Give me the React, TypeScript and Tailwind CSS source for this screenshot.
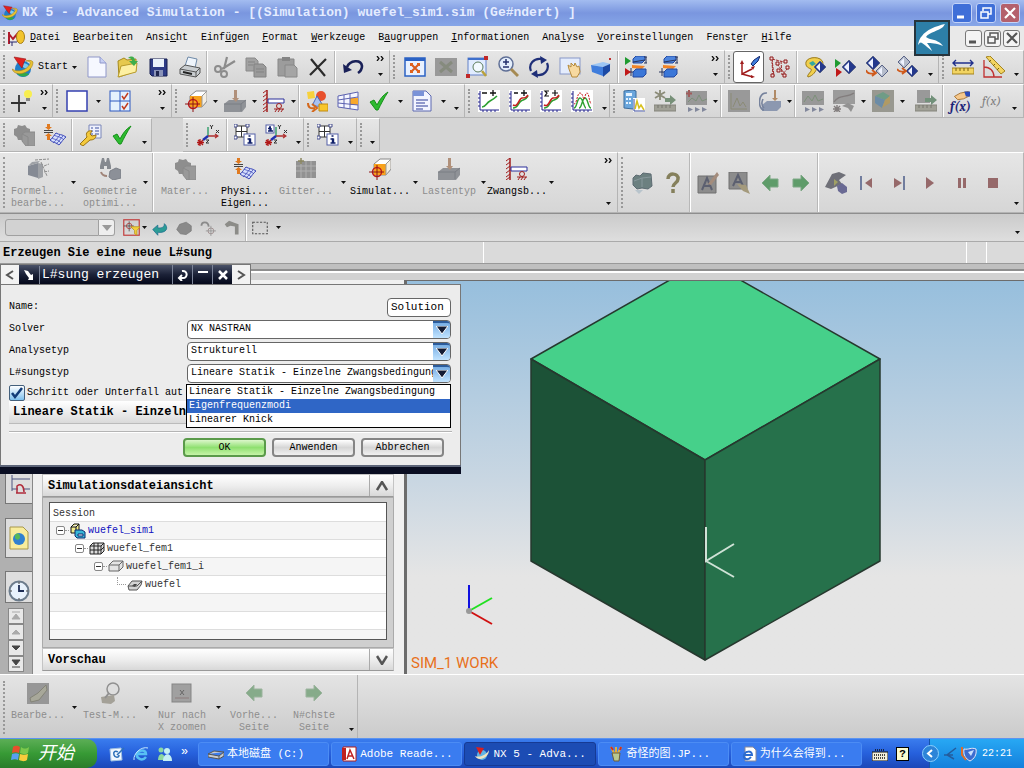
import { useState, type ReactNode } from "react";
import clsx from "clsx";

const MENU: [string, string, string][] = [
  ["", "D", "atei"],
  ["", "B", "earbeiten"],
  ["Ansi", "c", "ht"],
  ["Einf", "ü", "gen"],
  ["", "F", "ormat"],
  ["", "W", "erkzeuge"],
  ["B", "a", "ugruppen"],
  ["", "I", "nformationen"],
  ["Ana", "l", "yse"],
  ["", "V", "oreinstellungen"],
  ["Fenst", "e", "r"],
  ["", "H", "ilfe"],
];

const SOLUTION_TYPES = [
  "Lineare Statik - Einzelne Zwangsbedingung",
  "Eigenfrequenzmodi",
  "Linearer Knick",
];

function Svg({ children, size = 22 }: { children: ReactNode; size?: number }) {
  return (
    <svg width={size} height={size} viewBox="0 0 22 22" fill="none" className="shrink-0" aria-hidden>
      {children}
    </svg>
  );
}

// Shared drawing parts
const graphFrame = (
  <>
    <path d="M0 0h22v22H0z" fill="#fff" />
    <path d="M2 1v19h19" stroke="#22228c" />
    <path d="M0 4h2M0 8h2M0 12h2M0 16h2M5 20v2M9 20v2M13 20v2M17 20v2" stroke="#22228c" />
  </>
);

const infoBadge = (x: number, y: number, s: number) => (
  <>
    <rect x={x} y={y} width={s} height={s} fill="#fff" stroke="#5560a8" />
    <path
      d={`M${x + s / 2 - 2} ${y + s - 2}h5M${x + s / 2 - 2} ${y + s / 2 - 0.5}h3M${x + s / 2 - 1} ${y + 2}h2`}
      stroke="#10206a"
      strokeWidth="1.500"
    />
    <path d={`M${x + s / 2 + 0.5} ${y + s / 2 - 1}v${s / 2 - 1}`} stroke="#10206a" strokeWidth="2.400" />
  </>
);

const csys = (
  <>
    <path d="M11 3v9" stroke="#3aa070" strokeWidth="1.500" />
    <path d="M11 12h10M18 10l3 2-3 2" stroke="#b03030" strokeWidth="1.300" />
    <path d="M11 12l-5 4" stroke="#2030b0" strokeWidth="2.500" />
    <path d="M3 15v7M0 18.500h7M1 16l5 5M6 16l-5 5" stroke="#b01818" strokeWidth="1.300" />
    <path d="M13 1l1.500 2L16 1M14.500 3v2M19 6l3 3M22 6l-3 3M9 16h3l-3 3h3" stroke="#333" />
  </>
);

const diamond = (x: number, y: number, w: number, c: string) => (
  <>
    <path d={`M${x} ${y}l${w} ${-w} ${w} ${w} ${-w} ${w}z`} fill={c} stroke="#5a6488" />
    <path d={`M${x + 2} ${y}l${w - 2} ${2 - w}v${(w - 2) * 2}z`} fill="#eef2ff" />
  </>
);

const solverBlocks = (
  <>
    <path d="M8 3l3-3h9v4l-3 3H8z" fill="#4d84dd" stroke="#2248a0" />
    <path d="M7 9l13 1-3 3-10-1z" fill="#f08428" />
    <path d="M8 16l3-3h10v5l-3 3H8z" fill="#3b77d8" stroke="#2248a0" />
    <path d="M21 1v6M19 1h3M19 7h3M6 12v8M3 16h5M8 6l12-2" stroke="#26325c" />
  </>
);

const ICONS: Record<string, ReactNode> = {
  nx: (
    <>
      <circle cx="11" cy="13" r="8" fill="#1f7fc8" />
      <path d="M5 17c2 4 8 5 12 1-3-1-7-3-12-1z" fill="#2fa84a" />
      <path d="M8 8c4-2 9 0 10 4-3 2-7 0-10-4z" fill="#7fc9ee" />
      <path d="M0 13c3 9 21 4 21-7-1-2-5-2-7-1 3 0 5 1 4 3-3 6-12 9-18 5z" fill="#e8c233" stroke="#a5801a" strokeWidth=".6" />
      <path d="M2 1l12 2-2 3-2 6-4-5z" fill="#e02020" stroke="#98120f" strokeWidth=".6" />
    </>
  ),
  newDoc: (
    <>
      <path d="M2 1h12l6 6v14H2z" fill="#f6f8ff" stroke="#8f97c9" />
      <path d="M14 1v6h6" fill="#c7d0f4" stroke="#8f97c9" />
    </>
  ),
  open: (
    <>
      <path d="M1 5l6-3 3 2 9-1v12L2 21z" fill="#e6c94e" stroke="#a58a1e" />
      <path d="M1 21l3-11 16-3-1 9z" fill="#fdf0a2" stroke="#b89b2c" />
      <path d="M11 2c4-3 7-1 7 3h3l-4 5-5-5h3c0-2-2-3-4-3z" fill="#3fae4a" />
    </>
  ),
  save: (
    <>
      <path d="M2 3h17v17H4l-2-2z" fill="#2d3b86" stroke="#161e50" />
      <path d="M5 3h11v8H5z" fill="#e9f1fb" />
      <path d="M6 14h9v6H6z" fill="#8a93b8" />
      <path d="M8 15h3v5H8z" fill="#20274f" />
    </>
  ),
  print: (
    <>
      <path d="M6 10l3-9 9 2-2 9z" fill="#eef4fb" stroke="#6f8aa8" />
      <path d="M1 13l5-4 15 3v5l-4 4-16-3z" fill="#c9cdd0" stroke="#555" />
      <path d="M1 13l16 3 4-4M17 16v5" stroke="#555" />
      <path d="M4 16l9 2" stroke="#222" strokeWidth="2" />
    </>
  ),
  cut: (
    <>
      <path d="M13 1l-3 12M21 5L8 13" stroke="#8c8c8c" strokeWidth="2.200" />
      <circle cx="4" cy="13" r="3" stroke="#8c8c8c" strokeWidth="2" />
      <circle cx="10" cy="18" r="3" stroke="#8c8c8c" strokeWidth="2" />
    </>
  ),
  copy: (
    <>
      <path d="M1 2h9l3 3v10H1z" fill="#a2a2a2" stroke="#8a8a8a" />
      <path d="M9 8h9l3 3v10H9z" fill="#9a9a9a" stroke="#828282" />
      <path d="M11 13h8M11 16h8M3 6h7M3 9h5" stroke="#838383" />
    </>
  ),
  paste: (
    <>
      <path d="M2 3h16v17H2z" fill="#9c9c9c" stroke="#878787" />
      <path d="M6 1h8v4H6z" fill="#858585" />
      <path d="M9 9h9l3 3v9H9z" fill="#a5a5a5" stroke="#888" />
    </>
  ),
  del: <path d="M4 3l14 17M19 3L3 19" stroke="#2b2b2b" strokeWidth="2.200" />,
  undo: (
    <>
      <path d="M5 11C8 4 19 3 20 10c0 3-1 5-4 7" stroke="#1a2158" strokeWidth="2.600" />
      <path d="M1 8l1 9 8-3z" fill="#1a2158" />
    </>
  ),
  fit: (
    <>
      <rect x="1" y="2" width="20" height="18" fill="#e8f1ff" stroke="#2b62c4" strokeWidth="1.500" />
      <path d="M1 2h20v3H1z" fill="#2b62c4" />
      <path d="M7 8l8 8M15 8l-8 8" stroke="#d85a1c" strokeWidth="2" />
      <path d="M6 7h3v3H6zM13 7h3v3h-3zM6 14h3v3H6zM13 14h3v3h-3z" fill="#e0621c" />
    </>
  ),
  fitOff: (
    <>
      <path d="M0 2h22v18H0z" fill="#999" />
      <path d="M5 6l12 10M17 6L5 16" stroke="#868b7e" strokeWidth="3" />
    </>
  ),
  zoomWin: (
    <>
      <rect x="2" y="2" width="18" height="17" fill="#e1ecff" stroke="#6482c8" />
      <path d="M2 2h18v2H2z" fill="#3f70cc" />
      <circle cx="12" cy="11" r="5" fill="#f3faff" stroke="#5c7c5c" />
      <path d="M16 15l4 5" stroke="#b9a13c" strokeWidth="2.500" />
      <path d="M0 18h4v4H0zM18 0h4v4h-4z" fill="#c02828" />
    </>
  ),
  zoom: (
    <>
      <circle cx="9" cy="8" r="7" fill="#e4eefb" stroke="#5f6f96" strokeWidth="1.500" />
      <path d="M6 6h6M9 3v6M6 11h6" stroke="#26326e" strokeWidth="1.500" />
      <path d="M14 13l7 7" stroke="#a58a52" strokeWidth="3" />
    </>
  ),
  rotate: (
    <>
      <path d="M3 15C0 8 6 2 13 3M19 7c3 7-3 13-10 12" stroke="#1f2f78" strokeWidth="2.200" />
      <path d="M12 0l7 4-6 4zM10 22l-7-4 6-4z" fill="#1f2f78" />
    </>
  ),
  pan: (
    <>
      <rect x="1" y="2" width="20" height="16" fill="#e4ecfc" stroke="#8898c8" />
      <path d="M10 13l-1-4 3 2V7l3 3 1-3 2 4 2-1 1 6-3 5h-5z" fill="#f7d9a0" stroke="#b58a3c" />
    </>
  ),
  cube: (
    <>
      <path d="M1 9l12-3 8 2-8 3z" fill="#9cc6f4" />
      <path d="M1 9l12 2v9L2 16z" fill="#3f7ddc" />
      <path d="M13 11l7-3v7l-7 6z" fill="#1c4aa4" />
      <path d="M19 2h2v2h-2z" fill="#c03030" />
    </>
  ),
  solve1: (
    <>
      {solverBlocks}
      <path d="M0 1l6 4-6 4z" fill="#1f9a30" />
      <path d="M0 12l6 4-6 4z" fill="#c01818" />
    </>
  ),
  solve2: solverBlocks,
  axes: (
    <>
      <path d="M4 6v12l10-5M4 18l11 3" stroke="#a01c1c" strokeWidth="1.500" />
      <path d="M2 8l2-4 2 4zM13 11l4-1-2 4zM13 19l4 2-4 1z" fill="#a01c1c" />
      <path d="M13 8l3-4 6-4-2 5-5 5z" fill="#3f7ddc" stroke="#16286c" />
    </>
  ),
  nodes: (
    <>
      <path d="M3 3l12 3M4 20L3 6M8 8l8 10M3 3l2 17M12 5l1 14 6-7" stroke="#a02c2c" strokeDasharray="3 1" />
      <path d="M1 1h3v3H1zM7 6h3v3H7zM15 4h3v3h-3zM2 18h3v3H2zM8 13h3v3H8zM14 18h3v3h-3zM17 10h3v3h-3z" fill="#f6dada" stroke="#8c1818" />
    </>
  ),
  palette: (
    <>
      <path d="M2 6c2-6 16-6 17 1 0 4-5 2-6 5s-4 8-9 9c-2-2 5-6 3-8-2-1-6-2-5-7z" fill="#f1cf4c" stroke="#9a7a1e" />
      <path d="M5 7l4-2 3 3-4 2z" fill="#35a8a0" />
      {diamond(10, 11, 6, "#24388c")}
    </>
  ),
  playDiamond: (
    <>
      <path d="M0 3l6 4-6 5z" fill="#1f9a30" />
      <path d="M1 12l6 4-6 5z" fill="#c01818" />
      {diamond(7, 11, 7, "#24388c")}
    </>
  ),
  diaUp: (
    <>
      {diamond(0, 7, 7, "#24388c")}
      {diamond(10, 15, 6, "#b5bccb")}
      <path d="M0 14c1 4 5 4 9 3M6 14l4 3-4 3" stroke="#d05a1c" strokeWidth="1.800" />
    </>
  ),
  diaDown: (
    <>
      {diamond(1, 6, 6, "#b5bccb")}
      {diamond(9, 15, 6, "#24388c")}
      <path d="M0 13c2 3 5 3 8 2M5 12l4 3-4 3" stroke="#d05a1c" strokeWidth="1.800" />
    </>
  ),
  ruler: (
    <>
      <path d="M1 7h20M4 4L1 7l3 3M18 4l3 3-3 3" stroke="#1f2f8c" strokeWidth="1.400" />
      <path d="M0 12h22v6H0z" fill="#f2d462" stroke="#a3831e" />
      <path d="M4 12v3M8 12v3M12 12v3M16 12v3" stroke="#7a6010" />
    </>
  ),
  angle: (
    <>
      <path d="M1 4v17h18M1 11c6 0 10 4 10 10" stroke="#c03030" strokeWidth="1.300" />
      <path d="M3 1l4-1 15 15-4 3z" fill="#f2d462" stroke="#a3831e" />
      <path d="M8 4L6 6M12 8l-2 2M16 12l-2 2" stroke="#7a6010" />
    </>
  ),
  point: (
    <>
      <path d="M0 13h15M8 5v17" stroke="#333" strokeWidth="1.800" />
      <circle cx="17" cy="4" r="4" fill="#f8ee50" />
      <path d="M15 8h4v3h-4z" fill="#888" />
    </>
  ),
  square: <rect x="1" y="1" width="20" height="20" fill="#fff" stroke="#3440b0" strokeWidth="1.500" />,
  checks: (
    <>
      <rect x="1" y="1" width="20" height="20" fill="#e5f1fd" stroke="#2c58c0" />
      <path d="M11 1v20M1 11h20" stroke="#2c58c0" />
      <path d="M13 6l2 3 4-6M13 16l2 3 4-6" stroke="#c23a1c" strokeWidth="1.500" />
    </>
  ),
  sim: (
    <>
      <path d="M5 6l6-5h11v10l-5 6H5z" fill="#fff" stroke="#888" />
      <path d="M5 6h12v11H5z" fill="#f8a21c" />
      <path d="M17 6l5-5v10l-5 6z" fill="#f3eee4" stroke="#999" />
      <circle cx="8" cy="14" r="4.500" stroke="#c01c1c" strokeWidth="1.500" />
      <path d="M0 14h15M8 7v15" stroke="#8e1414" />
    </>
  ),
  load: (
    <>
      <path d="M0 14l5-4h17v7l-4 5H0z" fill="#8f9297" />
      <path d="M0 14h17l5-4M17 14v7" stroke="#7b7e84" />
      <path d="M10 0h3v8h2l-3 4-4-4h2z" fill="#b0907a" />
    </>
  ),
  constraint: (
    <>
      <path d="M4 0v22" stroke="#a01c1c" strokeWidth="1.500" />
      <path d="M0 3l4-3M0 7l4-3M0 11l4-3M0 15l4-3M0 19l4-3M0 22l4-3" stroke="#a01c1c" />
      <path d="M5 9h16v4H5z" fill="#fff" stroke="#2a2f9a" />
      <circle cx="16" cy="16" r="2.500" stroke="#a01c1c" />
      <path d="M11 19h10M12 22l2-3M15 22l2-3M18 22l2-3" stroke="#a01c1c" />
    </>
  ),
  shapes: (
    <>
      <path d="M1 2l7-1 1 7-7 1z" fill="#f7d13c" />
      <circle cx="15" cy="6" r="5" fill="#e8502c" />
      <path d="M7 14l4-8 5 8c-2 3-7 3-9 0z" fill="#a8c2f0" stroke="#4a68b8" />
      <path d="M13 14h9v7h-9z" fill="#f8c62c" stroke="#c08a14" />
      <path d="M2 13c0 5 3 6 7 5M6 14l5 4-5 4" stroke="#d4681c" strokeWidth="2" />
    </>
  ),
  nozzle: (
    <>
      <path d="M1 6l20-4v18L1 17z" fill="#f5f6ff" stroke="#5c62b0" />
      <path d="M13 8h8v7h-8z" fill="#f8a82c" />
      <path d="M1 10l20-3M1 13l20 2M7 5v13M13 4v15" stroke="#5c62b0" />
    </>
  ),
  check: <path d="M2 12l4-2 3 5C12 9 15 5 20 2c-4 6-7 12-10 18H8z" fill="#2dbb30" stroke="#159018" />,
  report: (
    <>
      <path d="M2 1h13l5 5v15H2z" fill="#f2f4ff" stroke="#5c68b0" />
      <path d="M2 1h11v5H2z" fill="#7a92d8" />
      <path d="M5 10h12M5 13h9M5 16h12M5 19h7" stroke="#2c3c98" />
    </>
  ),
  graph1: (
    <>
      {graphFrame}
      <path d="M4 17c4 0 4-4 8-6s4-2 7-5" stroke="#2ca030" strokeWidth="1.600" />
      <path d="M4 3h5M12 3h6M15 0v6" stroke="#111" strokeWidth="1.300" />
    </>
  ),
  graph2: (
    <>
      {graphFrame}
      <path d="M4 18c5 0 5-5 8-7s5-1 7-5" stroke="#2ca030" strokeWidth="1.600" />
      <path d="M4 15c5 3 6-7 9-7s4 0 6-3" stroke="#c82020" strokeWidth="1.600" />
      <path d="M5 3h4M12 3h6M15 0v6" stroke="#111" strokeWidth="1.300" />
    </>
  ),
  graph3: (
    <>
      {graphFrame}
      <path d="M4 18c5 0 5-5 8-7s5-1 7-5" stroke="#2ca030" strokeWidth="1.600" />
      <path d="M4 15c5 3 6-7 9-7s4 0 6-3" stroke="#c82020" strokeWidth="1.600" />
      <path d="M9 1H5l2 2-2 3h4M12 3h6M15 0v6" stroke="#111" strokeWidth="1.200" />
    </>
  ),
  graph4: (
    <>
      {graphFrame}
      <path d="M3 18C6 18 6 8 9 8s4 10 6 10M8 18c3 0 3-10 6-10s3 10 6 10" stroke="#2ca030" strokeWidth="1.400" />
      <path d="M3 14C6 14 6 3 9 3s3 6 4 6 1-6 3-6 2 8 4 11" stroke="#c82020" strokeDasharray="2 1" />
    </>
  ),
  calc: (
    <>
      <path d="M1 1l9-1 3 1v16l-3 2-9-1z" fill="#6aa6dc" stroke="#3c6c9c" />
      <path d="M3 3h6v3H3zM3 8h2v2H3zM6 8h2v2H6zM3 12h2v2H3zM6 12h2v2H6z" fill="#e8f4ff" />
      <path d="M10 8h12v14H10z" fill="#fff" />
      <path d="M11 9v12h11" stroke="#3a4a9c" />
      <path d="M12 19l2-8 2 7 2-3 3 5" stroke="#d8c01c" strokeWidth="1.500" />
    </>
  ),
  starRuler: (
    <>
      <path d="M6 0v10M1 2l10 6M11 2L1 8" stroke="#8b8b78" strokeWidth="1.800" />
      <path d="M11 8h5V5l6 5-6 5v-3h-5z" fill="#779078" />
      <path d="M0 15h22v6H0z" fill="#a0a096" stroke="#85857c" />
      <path d="M4 15v3M8 15v3M12 15v3M16 15v3" stroke="#77776e" />
    </>
  ),
  grayPlot: (
    <>
      <path d="M0 1h22v14H0z" fill="#989898" />
      <path d="M2 12l4-6 4 5 3-6 3 6 5-2" stroke="#7c9079" />
      <path d="M3 17l5 2.500L3 22zM10 17l5 2.500-5 2.500zM17 17l5 2.500-5 2.500z" fill="#82889c" />
    </>
  ),
  grayPlotNew: (
    <>
      <path d="M1 1h21v14H1z" fill="#989898" />
      <path d="M3 12l4-4 4 3 3-6 3 6 5-2" stroke="#7c9079" />
      <path d="M4 0v7M1 3.500h6" stroke="#a05c5c" strokeWidth="2" />
      <path d="M3 17l5 2.500L3 22zM10 17l5 2.500-5 2.500zM17 17l5 2.500-5 2.500z" fill="#82889c" />
    </>
  ),
  grayBox: (
    <>
      <path d="M0 0h22v22H0z" fill="#999" />
      <path d="M3 3v16h16M5 17l4-9 3 8 3-4 3 5" stroke="#8b8b76" />
    </>
  ),
  loadPart: (
    <>
      <path d="M3 15l5-4h14v6l-4 4H3z" fill="#8c98b0" />
      <path d="M15 0h2v8h2l-3 3-3-3h2z" fill="#b08a66" />
      <path d="M8 3C-2 2-1 20 5 20M4 9c-2 4-1 7 1 9" stroke="#76829c" strokeWidth="1.600" />
    </>
  ),
  grayNet: (
    <>
      <path d="M0 0h22v14H0z" fill="#9b9b9b" />
      <path d="M1 12C6 4 14 8 21 3M4 15v7M0 19h8M1 16l6 6M7 16l-6 6" stroke="#827d7d" strokeWidth="1.400" />
      <path d="M9 16l6-3 6 3-3 6-3-4z" fill="#929292" />
    </>
  ),
  grayMap: (
    <>
      <path d="M0 0h22v22H0z" fill="#989890" />
      <path d="M3 6l8-4 7 4-5 4z" fill="#6f9c86" />
      <path d="M3 6l10 4-3 8-7-5z" fill="#6c8ca6" />
      <path d="M13 10l5-4v7l-8 5z" fill="#b09a64" />
    </>
  ),
  grayRuler: (
    <>
      <path d="M2 0h13v13H2z" fill="#999" />
      <path d="M10 8h6V5l6 5-6 5v-3h-6z" fill="#72917a" />
      <path d="M0 15h22v6H0z" fill="#a0a096" stroke="#85857c" />
      <path d="M4 15v3M8 15v3M12 15v3M16 15v3" stroke="#77776e" />
    </>
  ),
  material: (
    <>
      <path d="M1 5l3-1 1-3 4 1 3-1 2 3 3 1v4l-2 3-2 4H5l-1-3-3-2z" fill="#8e8e8e" />
      <path d="M9 10l3-2h10v14H13l-4-5z" fill="#999" stroke="#8a8a8a" />
      <path d="M9 10l6 3v9" stroke="#8a8a8a" />
    </>
  ),
  physical: (
    <>
      <path d="M3 0h3v3h2L4.500 6 1 3h2zM3 16h3v-4h2L4.500 9 1 12h2z" fill="#e07a20" />
      <path d="M0 6.500h9M0 8.500h9" stroke="#333" strokeWidth=".9" />
      <path d="M6 16c3-2 4-5 6-7 3 2 6 1 10 4-3 2-4 5-7 8-3-3-6-2-9-5z" fill="#d6dffc" stroke="#3c48b8" />
      <path d="M9 19c3-2 4-5 7-8M12 20c3-2 4-5 7-8M8 14c3 2 6 1 9 5M10 11c3 2 6 1 10 5" stroke="#3c48b8" strokeWidth=".8" />
    </>
  ),
  wrench: (
    <>
      <path d="M9 1h12v13H9z" fill="#eef1fc" stroke="#7a86b8" />
      <path d="M11 4h2M15 4h4M11 7h2M15 7h4M11 10h2M15 10h4" stroke="#3c50a0" />
      <path d="M0 20l7-7c-2-4 1-7 5-6l-2 3 2 2 4-1c0 4-3 5-6 5l-7 6z" fill="#f3c93c" stroke="#9a7414" />
    </>
  ),
  csys,
  meshInfo: (
    <>
      <path d="M2 2h11v11H2zM7.500 2v11M2 7.500h11" fill="#fff" stroke="#333" />
      <path d="M0 0h3v3H0zM12 0h3v3h-3zM0 12h3v3H0z" fill="#fff" stroke="#444c8c" />
      {infoBadge(10, 10, 11)}
    </>
  ),
  csysInfo: (
    <>
      {csys}
      {infoBadge(1, 1, 8)}
    </>
  ),
  fx: (
    <>
      <path d="M3 6l7-4 10-2 2 5-8 4-7 1z" fill="#f6c88c" stroke="#9c6420" />
      <path d="M15 0h7v6h-5z" fill="#2c4cb8" />
    </>
  ),
  formulaBox: (
    <>
      <path d="M1 8l10-3v15L1 17z" fill="#858a94" />
      <path d="M11 5l5 1v13l-5 2zM1 8l4-4 8-1-2 2z" fill="#9ea1a6" />
      <path d="M8 2l14-1M17 8l5-2M17 14l5-1M14 4l6 14" stroke="#8c8c8c" strokeDasharray="3 1" />
    </>
  ),
  geometry: (
    <>
      <path d="M1 8l2-8h2l1 4h1l1-4h2l2 8v3H8V8H5v3H1z" fill="#868a90" />
      <path d="M11 13l6-3 5 2v8l-8 2-4-3z" fill="#8c9098" stroke="#7c8088" />
      <path d="M2 14c1 3 3 4 6 4" stroke="#a08478" strokeWidth="2" />
    </>
  ),
  mesh: (
    <>
      <path d="M1 3h20v17H1z" fill="#929292" />
      <path d="M1 8h20M1 13h20M6 3v17M11 3v17M16 3v17" stroke="#b0b0b0" />
      <path d="M6 0v6M3 3h6" stroke="#8a8660" strokeWidth="1.500" />
    </>
  ),
  part: (
    <>
      <path d="M2 6l3-3 4 1 3-3 8 1 1 12-4 3-6-1-5 1-4-4z" fill="#6c8080" stroke="#5d6b72" />
      <path d="M4 18h8l-4 4z" fill="#b8c4cc" />
      <path d="M3 9l8-3 9-1M11 6v9" stroke="#88989c" />
    </>
  ),
  question: <path d="M6 7c0-7 11-6 10 0 0 4-5 4-5 8M11 17v4" stroke="#85805c" strokeWidth="3.500" />,
  editText: (
    <>
      <path d="M1 4h18v17H1z" fill="#8c8c8c" stroke="#707070" />
      <path d="M5 18l5-12 5 12M7 14h6" stroke="#5c6070" strokeWidth="2" />
      <path d="M11 12L20 0l2 3-8 10z" fill="#a48c7c" />
    </>
  ),
  pickText: (
    <>
      <path d="M1 0h18v17H1z" fill="#8c8c8c" stroke="#707070" />
      <path d="M5 14l5-11 5 11M7 10h6" stroke="#5c6070" strokeWidth="2" />
      <path d="M9 12l9 1 4 9-7-3z" fill="#a49a7c" />
    </>
  ),
  left: <path d="M3 11l8-8v4h8v8h-8v4z" fill="#5f9c6a" stroke="#7fa886" />,
  right: <path d="M19 11l-8-8v4H3v8h8v4z" fill="#5f9c6a" stroke="#7fa886" />,
  leftPale: <path d="M3 11l8-8v4h8v8h-8v4z" fill="#86ab8a" stroke="#9cb49e" />,
  rightPale: <path d="M19 11l-8-8v4H3v8h8v4z" fill="#86ab8a" stroke="#9cb49e" />,
  post: (
    <>
      <path d="M0 15l7-13 7-2 7 3-7 5 3 4-11 5z" fill="#6f7078" />
      <path d="M9 7l4 3-4 4z" fill="#a0a064" />
      <path d="M12 14l5-3 5 4v5l-5 2-4-3z" fill="#6a6a94" />
    </>
  ),
  edit: (
    <>
      <path d="M0 1h22v21H0z" fill="#979797" />
      <path d="M3 16l8-5 8-8 1 5-8 10-8 2z" fill="#a8a89a" stroke="#848478" />
    </>
  ),
  testM: (
    <>
      <circle cx="14" cy="7" r="6" fill="#dedede" stroke="#909090" strokeWidth="1.500" />
      <path d="M2 15l13-2 1 6-4 3-9-1z" fill="#a4a198" />
      <path d="M10 11l-4 5" stroke="#909090" strokeWidth="2" />
    </>
  ),
  zoomX: (
    <>
      <rect x="1" y="2" width="19" height="18" fill="#a0a0a0" stroke="#858585" />
      <path d="M9 8l4 5M13 8l-4 5" stroke="#666" />
      <path d="M4 16h14" stroke="#8c7c7c" />
    </>
  ),
  filter: (
    <>
      <rect x="1" y="1" width="20" height="20" stroke="#c23a3a" strokeWidth="1.500" />
      <path d="M1 9h13M8 3v13" stroke="#444" />
      <circle cx="8" cy="9" r="3.500" stroke="#a83030" />
      <path d="M10 10h12l-4 5v6l-3-2v-4z" fill="#f3d03c" stroke="#b8921c" />
    </>
  ),
  back: <path d="M1 13l7-6v4c6 0 9-1 9-6 6 5 4 13-9 12v4z" fill="#2c9c96" stroke="#1c6c8c" />,
  blob: <path d="M1 13l4-7 9-3 7 5v7l-7 5-8-1z" fill="#8a8a8a" stroke="#7a7a7a" />,
  snap: (
    <>
      <path d="M2 8c0-6 9-7 10 1" stroke="#8a8a8a" strokeWidth="2.500" />
      <circle cx="15" cy="15" r="4" stroke="#927c7c" />
      <path d="M15 8v14M8 15h14" stroke="#8a8a8a" />
    </>
  ),
  hammer: <path d="M1 6l6-5 8 3 5 2v14h-5V9l-6-1-5 2z" fill="#8c8c88" />,
  marquee: <rect x="1" y="3" width="20" height="16" stroke="#555" strokeWidth="1.500" strokeDasharray="3 2" />,
};

function Icon({ name, size }: { name: string; size?: number }) {
  return <Svg size={size}>{ICONS[name]}</Svg>;
}

function Caret() {
  return (
    <svg width="5" height="3" viewBox="0 0 5 3" className="shrink-0" aria-hidden>
      <path d="M0 0h5L2.500 3z" fill="#111" />
    </svg>
  );
}

function Drop({ wide }: { wide?: boolean }) {
  return (
    <button type="button" aria-label="Auswahl" className={clsx("flex h-8 shrink-0 items-center justify-center", wide ? "w-3" : "w-2")}>
      <Caret />
    </button>
  );
}

function LowDrop() {
  return (
    <button type="button" aria-label="Optionen" className="flex w-[14px] shrink-0 items-end justify-center self-stretch pb-[7px]">
      <Caret />
    </button>
  );
}

function Overflow() {
  return (
    <button type="button" aria-label="Weitere" className="ml-auto flex w-[18px] shrink-0 flex-col items-center justify-between self-stretch pt-[5px] pb-[7px]">
      <svg width="8" height="5" viewBox="0 0 8 5" fill="none" aria-hidden>
        <path d="M1 0l2 2.500L1 5M5 0l2 2.500L5 5" stroke="#111" strokeWidth="1.300" />
      </svg>
      <Caret />
    </button>
  );
}

function Tool({ name, className = "w-[31px]" }: { name: string; className?: string }) {
  return (
    <button type="button" aria-label={name} className={clsx("flex h-8 shrink-0 items-center justify-center", className)}>
      <Icon name={name} />
    </button>
  );
}

function Tools({ names }: { names: string[] }) {
  return (
    <>
      {names.map((n) => (
        <Tool key={n} name={n} />
      ))}
    </>
  );
}

function Sep() {
  return <span className="mx-px w-[2px] shrink-0 self-stretch border-l border-[#b8b8b8] bg-white" />;
}

function Group({ children, className }: { children: ReactNode; className?: string }) {
  return (
    <div className={clsx("flex shrink-0 items-center border-t border-r border-b border-t-white border-r-[#b4b4b4] border-b-[#b4b4b4] bg-linear-to-b from-[#e6e6e6] to-[#d6d6d6]", className)}>
      <span className="mx-[3px] my-1 w-[2px] shrink-0 self-stretch border-l-2 border-dotted border-[#999]" />
      {children}
    </div>
  );
}

function BigTool({ name, lines, className, off }: { name: string; lines: string[]; className: string; off?: boolean }) {
  return (
    <button
      type="button"
      className={clsx("flex shrink-0 flex-col items-center self-start pt-[5px] leading-[12px] whitespace-nowrap", off ? "text-[#8d8d8d]" : "text-black", className)}
    >
      <Icon name={name} />
      <span className="mt-[6px] flex flex-col items-center">
        {lines.map((l) => (
          <span key={l}>{l}</span>
        ))}
      </span>
    </button>
  );
}

const WINDOW_KINDS = ["min", "restore", "close"] as const;

function WinButton({ kind, tone }: { kind: (typeof WINDOW_KINDS)[number]; tone: string }) {
  return (
    <button type="button" aria-label={kind} className={clsx("flex items-center justify-center rounded-[3px] border", tone)}>
      <svg width="14" height="14" viewBox="0 0 14 14" fill="none" stroke="currentColor" strokeWidth="2" aria-hidden>
        {kind === "min" && <path d="M2 11h7" strokeWidth="3" />}
        {kind === "restore" && <path d="M4 5V2h8v6h-3M2 6h7v6H2z" strokeWidth="1.500" />}
        {kind === "close" && <path d="M2 2l10 10M12 2L2 12" strokeWidth="2.200" />}
      </svg>
    </button>
  );
}

function TitleBar() {
  return (
    <header className="flex h-[26px] shrink-0 items-center bg-linear-to-b from-[#a3bcf0] via-[#7a96df] to-[#86a6e8] pr-1 pl-[2px] text-[#e4ecff]">
      <Icon name="nx" size={16} />
      <h1 className="ml-1 text-[13px] font-bold whitespace-nowrap">
        NX 5 - Advanced Simulation - [(Simulation) wuefel_sim1.sim (Ge#ndert) ]
      </h1>
      <div className="ml-auto flex gap-1">
        {WINDOW_KINDS.map((k) => (
          <WinButton
            key={k}
            kind={k}
            tone={clsx("size-5 border-[#c4d4f8] text-white", k === "close" ? "bg-[#b4606c]" : "bg-[#3f6fd8]")}
          />
        ))}
      </div>
    </header>
  );
}

function MenuBar() {
  return (
    <nav className="flex h-6 shrink-0 items-center bg-[#e9e9e9] pr-1">
      <span className="mx-[3px] h-4 w-[2px] border-l-2 border-dotted border-[#999]" />
      <svg width="17" height="16" viewBox="0 0 17 16" fill="none" aria-hidden>
        <path d="M1 2v12M1 4l4 5 5-6v9" stroke="#b01c2c" strokeWidth="2" />
        <path d="M1 12h8M4 12v4" stroke="#26266c" />
        <ellipse cx="12.500" cy="7" rx="4" ry="6.500" fill="#f2c42c" stroke="#a8801a" />
      </svg>
      <ul className="ml-[5px] flex gap-[13px]">
        {MENU.map(([a, b, c]) => (
          <li key={a + b + c}>
            <button type="button" className="whitespace-nowrap">
              {a}
              <span className="underline">{b}</span>
              {c}
            </button>
          </li>
        ))}
      </ul>
      <div className="ml-auto flex gap-[2px]">
        {WINDOW_KINDS.map((k) => (
          <WinButton key={k} kind={k} tone="h-[17px] w-[17px] border-[#777] bg-[#f4f4f4] text-[#555]" />
        ))}
      </div>
    </nav>
  );
}

const PLAYBACK = [
  { label: "Anfang", d: "M13 5v10L6 10z", bar: "M2 3v14" },
  { label: "Ende", d: "M3 5v10l8-5z", bar: "M13 3v14" },
  { label: "Abspielen", d: "M4 4v12l8-6z", bar: "" },
  { label: "Pause", d: "M4 5h3v10H4zM9 5h3v10H9z", bar: "" },
  { label: "Stopp", d: "M3 5h10v10H3z", bar: "" },
];

function Toolbars() {
  return (
    <div className="shrink-0 bg-[#d5d5d5]">
      <div className="flex h-[34px]">
        <Group className="w-[390px]">
          <button type="button" className="flex h-8 w-[73px] shrink-0 items-center pl-1">
            <Icon name="nx" />
            <span className="mr-1 ml-1">Start</span>
            <Caret />
          </button>
          <Tools names={["newDoc", "open", "save", "print"]} />
          <Sep />
          <Tools names={["cut", "copy", "paste", "del"]} />
          <Sep />
          <Tool name="undo" />
          <Overflow />
        </Group>
        <Group className="w-[335px]">
          <span className="w-px" />
          <Tools names={["fit", "fitOff", "zoomWin", "zoom", "rotate", "pan", "cube"]} />
          <Sep />
          <Tools names={["solve1", "solve2"]} />
          <Overflow />
        </Group>
        <Group className="w-[214px]">
          <Tool name="axes" className="w-[31px] rounded-[3px] border border-[#666] bg-white" />
          <Tool name="nodes" />
          <Sep />
          <Tools names={["palette", "playDiamond", "diaUp", "diaDown"]} />
          <LowDrop />
        </Group>
        <Group className="grow">
          <Tools names={["ruler", "angle"]} />
          <LowDrop />
        </Group>
      </div>

      <div className="flex h-[34px]">
        <Group className="w-[53px]">
          <Tool name="point" className="w-[27px]" />
          <Overflow />
        </Group>
        <Group className="w-[119px]">
          <Tool name="square" />
          <Drop wide />
          <Tool name="checks" />
          <Overflow />
        </Group>
        <Group className="w-[293px]">
          <Tool name="sim" />
          <Drop />
          <Tool name="load" />
          <Drop />
          <Tool name="constraint" />
          <Drop />
          <Sep />
          <Tools names={["shapes", "nozzle", "check"]} />
          <Drop wide />
          <Tool name="report" />
          <Drop wide />
          <LowDrop />
        </Group>
        <Group className="w-[145px]">
          <Tools names={["graph1", "graph2", "graph3", "graph4"]} />
          <LowDrop />
        </Group>
        <Group className="grow">
          <Tools names={["calc", "starRuler", "grayPlotNew"]} />
          <Drop />
          <Sep />
          <Tools names={["grayBox", "loadPart"]} />
          <Drop />
          <Sep />
          <Tools names={["grayPlot", "grayNet"]} />
          <Drop />
          <Tool name="grayMap" />
          <Drop />
          <span className="w-1" />
          <Tool name="grayRuler" />
          <Sep />
          <button type="button" className="flex h-8 w-[31px] shrink-0 flex-col items-center justify-center font-serif text-[13px] leading-[11px] font-bold text-[#1c2478] italic">
            <svg width="18" height="10" viewBox="0 0 22 11" fill="none" aria-hidden>
              {ICONS.fx}
            </svg>
            f(x)
          </button>
          <button type="button" className="flex h-8 w-[31px] shrink-0 items-center justify-center font-serif text-[13px] text-[#808080] italic">
            f(x)
          </button>
          <LowDrop />
        </Group>
      </div>

      <div className="flex h-[34px]">
        <Group className="w-[152px]">
          <Tools names={["material", "physical"]} />
          <Sep />
          <span className="w-1" />
          <Tools names={["wrench", "check"]} />
          <LowDrop />
        </Group>
        <Group className="ml-[31px] w-[121px]">
          <Tool name="csys" className="w-[34px]" />
          <Sep />
          <Tools names={["meshInfo", "csysInfo"]} />
          <LowDrop />
        </Group>
        <Group className="w-[53px]">
          <Tool name="meshInfo" />
          <LowDrop />
        </Group>
        <Group>
          <LowDrop />
        </Group>
      </div>

      <div className="flex h-[62px] border-b border-[#8e8e8e]">
        <Group className="w-[618px]">
          <span className="w-px" />
          <BigTool name="formulaBox" lines={["Formel...", "bearbe..."]} className="w-[58px]" off />
          <Drop wide />
          <span className="w-[2px]" />
          <BigTool name="geometry" lines={["Geometrie", "optimi..."]} className="w-[58px]" off />
          <Drop wide />
          <Sep />
          <BigTool name="material" lines={["Mater..."]} className="w-[60px]" off />
          <BigTool name="physical" lines={["Physi...", "Eigen..."]} className="w-[60px]" />
          <BigTool name="mesh" lines={["Gitter..."]} className="w-[62px]" off />
          <Drop wide />
          <BigTool name="sim" lines={["Simulat..."]} className="w-[62px]" />
          <Drop />
          <BigTool name="load" lines={["Lastentyp"]} className="w-[60px]" off />
          <Drop />
          <BigTool name="constraint" lines={["Zwangsb..."]} className="w-[60px]" />
          <Drop />
          <Overflow />
        </Group>
        <Group className="grow">
          <Tools names={["part", "question"]} />
          <Sep />
          <Tools names={["editText", "pickText", "left", "right"]} />
          <Sep />
          <Tool name="post" />
          <div className="flex grow items-center justify-between px-2">
            {PLAYBACK.map((p) => (
              <button key={p.label} type="button" aria-label={p.label}>
                <svg width="16" height="20" viewBox="0 0 16 20" aria-hidden>
                  <path d={p.d} fill="#96696a" />
                  {p.bar && <path d={p.bar} stroke="#4c5c88" strokeWidth="1.500" />}
                </svg>
              </button>
            ))}
          </div>
          <LowDrop />
        </Group>
      </div>

      <div className="flex h-7 items-center border-b border-[#aaa] bg-linear-to-b from-[#cbcbcb] to-[#dedede]">
        <select aria-label="Auswahlfilter" disabled className="ml-[5px] h-[17px] w-[94px] appearance-none rounded-l-[3px] border border-[#a0a0a0] bg-[#d2d2d2]" />
        <span className="flex h-[17px] w-4 items-center justify-center rounded-r-[3px] border border-l-0 border-[#a0a0a0] bg-[#eee]">
          <svg width="10" height="6" viewBox="0 0 10 6" aria-hidden>
            <path d="M0 0h10L5 6z" fill="#999" />
          </svg>
        </span>
        <div className="ml-2 flex items-center">
          <button type="button" aria-label="Filter" className="w-[17px]">
            <Icon name="filter" size={17} />
          </button>
          <Drop />
          {["back", "blob", "snap", "hammer"].map((n) => (
            <button key={n} type="button" aria-label={n} className="flex w-6 justify-center">
              <Icon name={n} size={16} />
            </button>
          ))}
        </div>
        <Sep />
        <button type="button" aria-label="Rechteck" className="flex w-6 justify-center">
          <Icon name="marquee" size={16} />
        </button>
        <Drop wide />
        <span className="grow" />
        <LowDrop />
      </div>

      <div className="flex h-[22px] items-center border-b border-[#999] bg-[#dadada]">
        <p className="w-[483px] pl-[3px] text-[12px] font-bold">Erzeugen Sie eine neue L#sung</p>
        <span className="grow self-stretch border-l border-white" />
        <span className="w-5 self-stretch border-l border-white" />
        <span className="w-[38px] self-stretch border-l border-white" />
      </div>
      <div className="flex h-4 flex-col bg-[#bfbfbf] pt-[5px]">
        <div className="h-[2px] bg-[#8e8e8e]" />
        <div className="h-[9px] border-t-2 border-white bg-[#d2d2d2]" />
      </div>
    </div>
  );
}

function ComboArrow() {
  return (
    <span className="flex w-[17px] shrink-0 items-center justify-center rounded-r-[3px] border-t-2 border-[#2c5c9c] bg-linear-to-b from-[#78aee4] to-[#c2e4ff]">
      <svg width="12" height="8" viewBox="0 0 12 8" aria-hidden>
        <path d="M0 0h12L6 8z" fill="#141c34" stroke="#fff" />
      </svg>
    </span>
  );
}

function Field({ id, label, children }: { id: string; label: string; children: ReactNode }) {
  return (
    <div className="flex h-[22px] items-center justify-between">
      <label htmlFor={id}>{label}</label>
      {children}
    </div>
  );
}

function Combo({ id, options, value, onChange }: { id: string; options: string[]; value?: string; onChange?: (v: string) => void }) {
  return (
    <div className="flex h-[19px] w-[264px] rounded-[4px] border border-[#666] bg-white">
      <select
        id={id}
        value={value ?? options[0]}
        onChange={(e) => onChange?.(e.target.value)}
        className="min-w-0 grow appearance-none overflow-hidden bg-transparent pl-[3px] whitespace-nowrap outline-none"
      >
        {options.map((o) => (
          <option key={o}>{o}</option>
        ))}
      </select>
      <ComboArrow />
    </div>
  );
}

function DialogTitle() {
  const cell = "flex h-full w-5 items-center justify-center border-l border-[#7c8498]";
  return (
    <div className="flex h-5 w-[251px] items-center border border-b-0 border-[#777] bg-linear-to-b from-[#4a5268] via-[#1c2238] to-[#05081a] text-white">
      <button type="button" aria-label="Zurück" className="flex h-full w-[18px] items-center justify-center bg-[#f2f2f2]">
        <svg width="10" height="10" viewBox="0 0 10 10" fill="none" stroke="#555" strokeWidth="2"><path d="M8 1L2 5l6 4" /></svg>
      </button>
      <button type="button" aria-label="Anheften" className="flex h-full w-5 items-center justify-center">
        <svg width="10" height="10" viewBox="0 0 10 10" fill="#fff"><path d="M0 0l4 1 3 4 2-1v6H4l1-2-3-4z" /></svg>
      </button>
      <h2 className="grow border-l border-[#7c8498] pl-[2px] text-[13px] leading-[18px] whitespace-nowrap">L#sung erzeugen</h2>
      <button type="button" aria-label="Zurücksetzen" className={cell}>
        <svg width="12" height="12" viewBox="0 0 12 12" fill="none" stroke="#fff" strokeWidth="2"><path d="M5 2c6-1 6 7 1 7H2M5 6L2 9l3 3" /></svg>
      </button>
      <button type="button" aria-label="Minimieren" className={cell}>
        <svg width="10" height="12" viewBox="0 0 10 12" fill="none" stroke="#fff" strokeWidth="2"><path d="M0 3h10" /></svg>
      </button>
      <button type="button" aria-label="Schließen" className={cell}>
        <svg width="10" height="10" viewBox="0 0 10 10" fill="none" stroke="#fff" strokeWidth="2.500"><path d="M1 1l8 8M9 1L1 9" /></svg>
      </button>
      <button type="button" aria-label="Vor" className="flex h-full w-[18px] items-center justify-center bg-[#f2f2f2]">
        <svg width="10" height="10" viewBox="0 0 10 10" fill="none" stroke="#555" strokeWidth="2"><path d="M2 1l6 4-6 4" /></svg>
      </button>
    </div>
  );
}

function SolutionDialog() {
  const [type, setType] = useState(SOLUTION_TYPES[0]);
  const [auto, setAuto] = useState(true);
  const button = "h-[19px] w-[83px] rounded-[4px] border-2 text-center leading-[14px]";

  return (
    <section aria-label="L#sung erzeugen" className="absolute -top-4 left-0 z-10 w-[461px]">
      <DialogTitle />
      <div className="border border-b-0 border-[#777] bg-[#ececec] pt-[11px] pb-2 pl-2">
        <div className="pr-[9px]">
          <Field id="name" label="Name:">
            <input id="name" defaultValue="Solution" className="h-[19px] w-16 rounded-[4px] border border-[#666] bg-white px-[3px] text-[11px] outline-none" />
          </Field>
          <Field id="solver" label="Solver">
            <Combo id="solver" options={["NX NASTRAN"]} />
          </Field>
          <Field id="analysis" label="Analysetyp">
            <Combo id="analysis" options={["Strukturell"]} />
          </Field>
          <div className="relative">
            <Field id="type" label="L#sungstyp">
              <Combo id="type" options={SOLUTION_TYPES} value={type} onChange={setType} />
            </Field>
            <ul role="listbox" aria-label="L#sungstyp" className="absolute top-full right-0 z-20 w-[265px] border border-black bg-white leading-[14px]">
              {SOLUTION_TYPES.map((t) => (
                <li
                  key={t}
                  role="option"
                  aria-selected={t === "Eigenfrequenzmodi"}
                  onClick={() => setType(t)}
                  className={clsx("pl-[2px] whitespace-nowrap", t === "Eigenfrequenzmodi" && "bg-[#2f66c6] text-white")}
                >
                  {t}
                </li>
              ))}
            </ul>
          </div>
          <label className="flex h-[17px] items-center gap-[2px] whitespace-nowrap">
            <span className="relative flex size-4 shrink-0">
              <input
                type="checkbox"
                checked={auto}
                onChange={(e) => setAuto(e.target.checked)}
                className="size-4 appearance-none rounded-[2px] border border-[#44607c] bg-linear-to-b from-white to-[#7cc0ee]"
              />
              {auto && (
                <svg viewBox="0 0 16 16" fill="none" stroke="#123c78" strokeWidth="2.500" className="pointer-events-none absolute inset-0">
                  <path d="M3 8l3 4 7-9" />
                </svg>
              )}
            </span>
            Schritt oder Unterfall aut
          </label>
          <h3 className="h-[23px] border-b border-[#bbb] bg-linear-to-b from-white via-[#ededed] to-[#dadada] pl-1 text-[12px] leading-[22px] font-bold whitespace-nowrap">
            Lineare Statik - Einzeln
          </h3>
        </div>
        <hr className="mt-[7px] mr-2 mb-[5px] border-t border-b border-t-[#b4b4b4] border-b-white" />
        <div className="flex justify-end gap-[6px] pr-4">
          <button type="button" className={clsx(button, "border-[#5a9a4a] bg-linear-to-b from-[#dcf6ca] via-[#8fe070] to-[#c6f4a8]")}>OK</button>
          <button type="button" className={clsx(button, "border-[#858585] bg-linear-to-b from-white via-[#d6d6d6] to-[#f0f0f0]")}>Anwenden</button>
          <button type="button" className={clsx(button, "border-[#858585] bg-linear-to-b from-white via-[#d6d6d6] to-[#f0f0f0]")}>Abbrechen</button>
        </div>
      </div>
      <div className="h-[9px] border-t-2 border-[#5c6478] bg-[#0a0e22]" />
    </section>
  );
}

const TREE = [
  { name: "wuefel_sim1", pad: "pl-[6px]", icon: "sim" },
  { name: "wuefel_fem1", pad: "pl-[25px]", icon: "fem" },
  { name: "wuefel_fem1_i", pad: "pl-[44px]", icon: "ideal" },
  { name: "wuefel", pad: "pl-[67px]", icon: "part" },
];

function TreeIcon({ kind }: { kind: string }) {
  return (
    <svg width="16" height="16" viewBox="0 0 16 16" fill="none" className="shrink-0" aria-hidden>
      {kind === "sim" && (
        <>
          <path d="M1 4l3-3h5v6l-2 3H1zM1 4h5l3-3M6 4v6" fill="#f1ec8c" stroke="#111" />
          <path d="M5 7h7l3 2v6H7l-2-2z" fill="#38b8d8" stroke="#0a2a70" />
          <path d="M8 11h5v2H8z" fill="#fff" stroke="#0a2a70" />
        </>
      )}
      {kind === "fem" && (
        <>
          <path d="M1 5l3-3h11v8l-3 3H1z" fill="#ddd" stroke="#222" />
          <path d="M1 5h11l3-3M12 5v8M5 2v11M9 2v11M1 9h11l3-3" stroke="#222" />
        </>
      )}
      {kind === "ideal" && (
        <>
          <path d="M1 6l4-4h10v6l-4 4H1z" fill="#e4e4e4" stroke="#666" />
          <path d="M1 6h10l4-4M11 6v6" stroke="#666" />
        </>
      )}
      {kind === "part" && (
        <>
          <path d="M1 9l4-5h10l-1 4-4 5H2z" fill="#d4d4d4" stroke="#555" />
          <path d="M5 9l2-2h3l-2 3z" fill="#444" />
          <path d="M1 9h9l5-5" stroke="#555" />
        </>
      )}
    </svg>
  );
}

function PanelHeader({ title, up }: { title: string; up?: boolean }) {
  return (
    <div className="flex h-[23px] items-stretch border border-[#c4c4c4] border-b-[#999] bg-linear-to-b from-white via-[#eee] to-[#d8d8d8]">
      <h3 className="grow pl-[5px] text-[12px] leading-[23px] font-bold">{title}</h3>
      <button type="button" aria-label={title} className="flex w-6 items-center justify-center border-l border-[#aaa]">
        <svg width="12" height="10" viewBox="0 0 12 10" fill="none" stroke="#555" strokeWidth="2.500">
          <path d={up ? "M1 9l5-8 5 8" : "M1 1l5 8 5-8"} />
        </svg>
      </button>
    </div>
  );
}

function Navigator() {
  const tab = "flex w-[27px] items-center justify-center self-end border border-r-0 border-[#777] bg-[#dedede]";
  return (
    <aside className="flex w-[404px] shrink-0 overflow-hidden bg-[#f0f0f0]">
      <div className="flex w-[33px] shrink-0 flex-col justify-end border-r border-[#888] bg-[#b0b0b0]">
        <button type="button" aria-label="Simulation" className={clsx(tab, "h-[50px]")}>
          <svg width="24" height="24" viewBox="0 0 24 24" fill="none" className="mt-4">
            <path d="M5 0v16M5 14h6M5 4h18M17 14h6" stroke="#4c5480" />
            <path d="M10 18v-7c4-3 7 0 7 6M9 18h10" stroke="#b02c3c" strokeWidth="1.500" />
          </svg>
        </button>
        <button type="button" aria-label="Internet" className={clsx(tab, "mt-[14px] h-10")}>
          <svg width="20" height="24" viewBox="0 0 20 24" fill="none">
            <path d="M1 1h13l5 5v17H1z" fill="#f8ec9c" stroke="#a8984c" />
            <circle cx="10" cy="13" r="6" fill="#3080d0" />
            <path d="M6 9c3-3 5-1 5 2s-3 4-5 1z" fill="#58b858" />
          </svg>
        </button>
        <button type="button" aria-label="Historie" className={clsx(tab, "mt-[13px] h-8")}>
          <svg width="22" height="22" viewBox="0 0 22 22" fill="none" className="mt-2">
            <circle cx="11" cy="11" r="9.500" fill="#e8f2fc" stroke="#6c7c8c" strokeWidth="2" />
            <path d="M11 5v6h5" stroke="#1c2c54" strokeWidth="1.800" />
            <path d="M11 2v2M11 18v2M2 11h2M18 11h2" stroke="#444" />
          </svg>
        </button>
        <div className="mt-[5px] mb-[2px] flex flex-col items-center">
          {["M2 2h8M6 4l4 5H2z", "M6 4l4 4H2z", "M6 8l4-4H2z", "M6 7l4-5H2zM2 9h8"].map((d, i) => (
            <button key={d} type="button" aria-label={`Blättern ${i + 1}`} className="flex h-4 w-4 items-center justify-center border border-[#888] bg-[#e8e8e8]">
              <svg width="12" height="12" viewBox="0 0 12 12">
                <path d={d} fill={i < 2 ? "#aaa" : "#444"} stroke={i < 2 ? "#aaa" : "#444"} />
              </svg>
            </button>
          ))}
        </div>
      </div>
      <div className="flex grow flex-col justify-end pr-[10px] pb-[3px] pl-[9px]">
        <PanelHeader title="Simulationsdateiansicht" up />
        <div className="border border-[#aaa] bg-[#cfcfcf] px-[6px] pt-1 pb-[7px]">
          <ul role="tree" className="h-[138px] border border-[#555] bg-white text-[#333]">
            <li className="h-[19px] border-b border-[#ddd] pl-[3px] leading-[21px]">Session</li>
            {TREE.map((n, i) => (
              <li
                key={n.name}
                role="treeitem"
                className={clsx("flex h-[18px] items-center border-b border-[#ddd]", n.pad, i % 2 === 0 && "bg-[#f5f5f5]")}
              >
                {n.icon === "part" ? (
                  <span className="mb-2 h-2 w-[9px] border-b border-l border-dotted border-[#999]" />
                ) : (
                  <>
                    <span className="flex size-[9px] items-center justify-center rounded-[2px] border border-[#888] bg-white">
                      <span className="h-px w-[5px] bg-[#333]" />
                    </span>
                    <span className="w-1 border-b border-dotted border-[#999]" />
                  </>
                )}
                <span className={clsx("ml-px flex items-center gap-[2px]", i === 0 && "text-[#1010c0]")}>
                  <TreeIcon kind={n.icon} />
                  {n.name}
                </span>
              </li>
            ))}
            <li className="h-[18px] border-b border-[#ddd] bg-[#f5f5f5]" />
            <li className="h-[18px] border-b border-[#ddd]" />
            <li className="h-[9px] bg-[#f5f5f5]" />
          </ul>
        </div>
        <PanelHeader title="Vorschau" />
      </div>
    </aside>
  );
}

function Viewport() {
  return (
    <div className="relative min-w-0 grow border-t border-l-[3px] border-[#6c6c6c] bg-linear-to-b from-[#97bfdd] via-[#c8d6e2] via-50% to-[#e5e5e5] to-75%">
      <svg viewBox="0 1 617 394" preserveAspectRatio="xMinYMin slice" className="absolute inset-0 h-full w-full">
        <g stroke="#26382e" strokeWidth="1.500" strokeLinejoin="round">
          <path d="M124 79L298-20l175 99-175 101z" fill="#46d08a" />
          <path d="M124 79l174 101v200L124 281z" fill="#1c5237" />
          <path d="M473 79L298 180v200l175-99z" fill="#26714b" />
        </g>
        <path d="M299 247v34l28-17M299 281l28 16" fill="none" stroke="#cfe2d6" strokeWidth="2" />
        <g strokeWidth="2">
          <path d="M62 331v-26" stroke="#1010e0" />
          <path d="M62 331l23-13" stroke="#20e020" />
          <path d="M62 331l23 13" stroke="#d01010" />
          <circle cx="62" cy="331" r="3" fill="#999" />
        </g>
      </svg>
      <p className="absolute bottom-[3px] left-1 font-[Roboto,sans-serif] text-[15px] leading-4 text-[#e8701a]">SIM_1 WORK</p>
    </div>
  );
}

function BottomToolbar() {
  return (
    <div className="flex h-16 shrink-0 border-t border-white bg-linear-to-b from-[#e4e4e4] to-[#cbcbcb]">
      <div className="flex w-[358px] items-center border-r border-[#b4b4b4] pt-[2px]">
        <span className="mx-[3px] my-1 w-[2px] self-stretch border-l-2 border-dotted border-[#999]" />
        <BigTool name="edit" lines={["Bearbe..."]} className="w-[60px]" off />
        <Drop wide />
        <BigTool name="testM" lines={["Test-M..."]} className="w-[60px]" off />
        <Drop wide />
        <BigTool name="zoomX" lines={["Nur nach", "X zoomen"]} className="w-[60px]" off />
        <Drop wide />
        <BigTool name="leftPale" lines={["Vorhe...", "Seite"]} className="w-[60px]" off />
        <BigTool name="rightPale" lines={["N#chste", "Seite"]} className="w-[60px]" off />
        <LowDrop />
      </div>
    </div>
  );
}

const TASKS: { label: string; icon: ReactNode; active?: boolean }[] = [
  {
    label: "本地磁盘 (C:)",
    icon: <path d="M0 8l6-3 10 1v4l-5 3-11-2zM0 8l11 2 5-4M11 10v3" fill="#c8ccd0" stroke="#555" />,
  },
  {
    label: "Adobe Reade...",
    icon: (
      <>
        <path d="M2 1h13v14H2z" fill="#fff" stroke="#b01c1c" />
        <path d="M1 2h4v12H1z" fill="#c02020" />
        <path d="M6 13l3-9 4 9M7 10h5" stroke="#c02020" strokeWidth="1.500" />
      </>
    ),
  },
  {
    label: "NX 5 - Adva...",
    active: true,
    icon: (
      <>
        <circle cx="8" cy="9" r="5" fill="#60b4e4" />
        <path d="M1 10c3 6 14 2 14-6-2 4-8 8-14 6z" fill="#f0e4c0" />
        <path d="M2 1l8 1-4 7z" fill="#d82020" />
      </>
    ),
  },
  {
    label: "奇怪的图.JP...",
    icon: (
      <>
        <path d="M3 1l4 8M8 1v8M13 1L9 9" stroke="#e0b040" strokeWidth="2" />
        <path d="M4 7h8l-1 8H6z" fill="#b8c890" stroke="#6c5c3c" />
        <path d="M3 1l2 3M13 1l-1 3" stroke="#d03020" strokeWidth="2" />
      </>
    ),
  },
  {
    label: "为什么会得到...",
    icon: (
      <>
        <path d="M4 1h8l3 3v11H4z" fill="#fff" stroke="#889" />
        <path d="M10 11c-3 4-8 2-7-2s8-5 8 0H4" stroke="#2c6cd0" strokeWidth="2" />
      </>
    ),
  },
];

function Taskbar() {
  return (
    <footer className="flex h-[30px] shrink-0 items-center border-t border-[#5c94f0] bg-linear-to-b from-[#3a7cee] via-[#2660dc] to-[#1c48b8] text-white">
      <button
        type="button"
        className="flex h-full w-[97px] shrink-0 items-center gap-[7px] rounded-r-[10px] bg-linear-to-b from-[#5cae56] via-[#379a35] to-[#2a7c2a] pl-[11px] text-[18px] italic"
      >
        <svg width="20" height="18" viewBox="0 0 20 18" aria-hidden>
          <path d="M2 2c3-2 5-1 7 0L8 8c-2-1-5-1-7 0z" fill="#e8502c" />
          <path d="M10 2c3 2 5 2 8 0l-1 6c-3 2-5 1-8 0z" fill="#7cc84c" />
          <path d="M1 9c3-1 5-1 7 0l-1 6c-2-1-4-1-7 0z" fill="#58a0f0" />
          <path d="M9 9c3 1 5 1 8 0l-1 6c-3 2-5 1-8 0z" fill="#f8cc3c" />
        </svg>
        开始
      </button>
      <div className="flex w-[101px] shrink-0 items-center gap-2 pl-3">
        <svg width="16" height="16" viewBox="0 0 16 16" fill="none" aria-hidden>
          <path d="M1 3l11-1 1 12-11 1z" fill="#f0f8ff" stroke="#a0c0e0" />
          <path d="M9 6c-3-2-5 0-4 3s5 3 5 0M8 9l7-7" stroke="#2c70b8" strokeWidth="1.500" />
        </svg>
        <svg width="16" height="16" viewBox="0 0 16 16" fill="none" aria-hidden>
          <path d="M13 11c-4 5-10 1-9-3s9-5 9 0H4" stroke="#58c0f4" strokeWidth="2.500" />
          <path d="M1 14C0 8 8 0 15 2" stroke="#c8ecff" />
        </svg>
        <svg width="16" height="16" viewBox="0 0 16 16" aria-hidden>
          <circle cx="4" cy="4" r="2.500" fill="#8cd8a0" />
          <path d="M1 14c0-8 7-8 7 0z" fill="#8cd8a0" />
          <circle cx="10" cy="5" r="3" fill="#c4f0f4" />
          <path d="M6 15c0-9 9-9 9 0z" fill="#c4f0f4" />
        </svg>
        <span className="self-start text-[12px] leading-3">»</span>
      </div>
      <div className="flex min-w-0 grow gap-[2px]">
        {TASKS.map((t) => (
          <button
            key={t.label}
            type="button"
            className={clsx(
              "flex h-6 min-w-0 flex-1 items-center gap-[3px] overflow-hidden rounded-[3px] border pl-[9px] text-[11px] whitespace-nowrap",
              t.active ? "border-[#163a94] bg-[#1c4cb4]" : "border-[#4c8cf4] bg-[#3a7cf0]",
            )}
          >
            <svg width="16" height="16" viewBox="0 0 16 16" fill="none" className="shrink-0" aria-hidden>
              {t.icon}
            </svg>
            {t.label}
          </button>
        ))}
      </div>
      <div className="flex w-[67px] shrink-0 items-center gap-2 pl-[10px]">
        <svg width="16" height="14" viewBox="0 0 16 14" aria-hidden>
          <path d="M0 5h16v9H0z" fill="#f4f0dc" stroke="#111" />
          <path d="M2 8h12M2 11h12M3 3h10" stroke="#111" strokeWidth="1.500" strokeDasharray="1 1" />
        </svg>
        <span className="flex h-[14px] w-[13px] items-center justify-center border border-black bg-[#fcfcd0] text-[11px] font-bold text-black">?</span>
      </div>
      <div className="flex h-full shrink-0 items-center gap-1 border-l border-[#1454a8] bg-linear-to-b from-[#28a8f4] to-[#1480dc] pr-3">
        <button type="button" aria-label="Ausgeblendete Symbole" className="-ml-2 flex size-[17px] items-center justify-center rounded-full border border-[#8cd0fc] bg-[#2c84d8]">
          <svg width="8" height="9" viewBox="0 0 8 9" fill="none" stroke="#fff" strokeWidth="2"><path d="M6 1L2 4.500 6 8" /></svg>
        </button>
        <svg width="14" height="14" viewBox="0 0 14 14" fill="none" aria-hidden>
          <path d="M13 1L4 8l7 4M1 8h9" stroke="#245c9c" strokeWidth="1.500" />
        </svg>
        <svg width="17" height="16" viewBox="0 0 17 16" fill="none" aria-hidden>
          <path d="M3 3c5 1 7-2 12 0 1 6-2 10-6 12C5 13 2 9 3 3z" fill="#3c6cd0" stroke="#e8e8f8" />
          <path d="M1 1v8l4 5" stroke="#e06c28" strokeWidth="2" />
          <path d="M7 6l6-2-3 6z" fill="#c8e0ff" />
        </svg>
        <time>22:21</time>
      </div>
    </footer>
  );
}

export default function App() {
  return (
    <div className="relative flex h-screen w-full flex-col overflow-hidden bg-[#d5d5d5] font-['Liberation_Mono','Noto_Sans_CJK_SC',monospace] text-[10px] leading-[14px] text-black select-none">
      <TitleBar />
      <MenuBar />
      <Toolbars />
      <main className="relative flex min-h-0 grow">
        <Navigator />
        <Viewport />
        <SolutionDialog />
      </main>
      <BottomToolbar />
      <Taskbar />

      {/* Floating bird badge */}
      <div className="absolute top-5 right-[74px] flex size-9 items-center justify-center border-2 border-[#26343c] bg-[#2d7fa8]">
        <svg width="30" height="30" viewBox="0 0 30 30" aria-hidden>
          <path d="M28 1C19 3 9 7 5 13c-2 2-3 4-4 9 2-3 3-3 4-2 3 2 5 4 10 8-1-3-3-5-5-8 4 0 9 0 16 3-3-4-7-6-13-7-2-1-3-1-4-2C12 9 22 8 26 4z" fill="#fff" />
        </svg>
      </div>
    </div>
  );
}
